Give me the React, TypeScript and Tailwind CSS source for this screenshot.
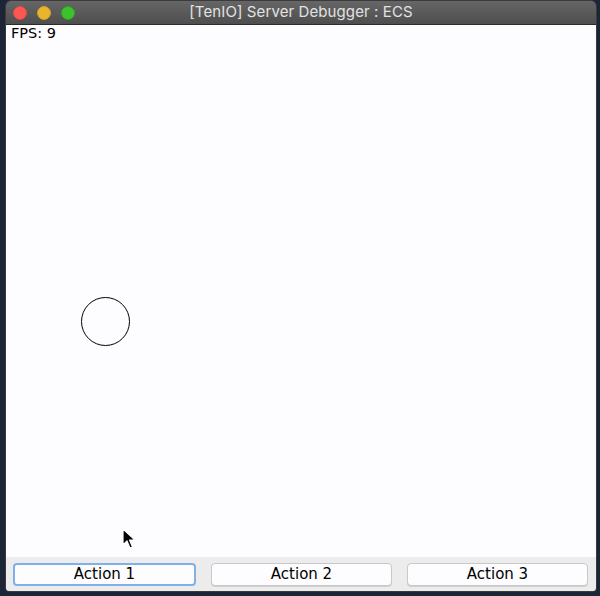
import { useState } from "react";

const actions = ["Action 1", "Action 2", "Action 3"];

const TrafficLights = () => (
  <div className="flex items-center gap-[10px] pl-[7px]">
    <span className="w-[14px] h-[14px] rounded-full bg-[#fc5753] border border-[#de4a44]" />
    <span className="w-[14px] h-[14px] rounded-full bg-[#e8b52c] border border-[#d19f26]" />
    <span className="w-[14px] h-[14px] rounded-full bg-[#3ec12f] border border-[#2ea724]" />
  </div>
);

const Cursor = () => (
  <svg width="14" height="22" viewBox="0 0 14 22" className="absolute left-[116px] top-[503px]">
    <path
      d="M1 1 L1 17 L5 13 L8 20 L10.5 19 L7.5 12 L13 12 Z"
      fill="#000"
      stroke="#fff"
      strokeWidth="1.2"
      strokeLinejoin="round"
    />
  </svg>
);

export default function App() {
  const [active, setActive] = useState(0);

  return (
    <div className="w-[600px] h-[596px] bg-[#1c2438] pl-[5px] pr-[3px] pb-[4px]">
      <div className="w-[592px] h-[592px] flex flex-col rounded-t-[6px] rounded-b-[4px] overflow-hidden border border-[#3a3a3a]">
        <div className="relative h-[24px] flex items-center bg-gradient-to-b from-[#666666] to-[#4e4e4e] border-b border-[#2b2b2b]">
          <TrafficLights />
          <div className="absolute inset-0 flex items-center justify-center text-[15px] text-[#e2e2e2] font-['Inter',sans-serif] tracking-[0.1px]">
            [TenIO] Server Debugger : ECS
          </div>
        </div>

        <div className="relative flex-1 bg-[#fdfcfe] font-['DejaVu_Sans',sans-serif]">
          <div className="pl-[5px] text-[14.5px] leading-[16px] text-black">FPS: 9</div>
          <div className="absolute left-[75px] top-[272px] w-[49px] h-[49px] rounded-full border-[1.5px] border-black" />
          <Cursor />
        </div>

        <div className="h-[34px] flex items-center gap-[15px] pl-[7px] pr-[8px] bg-[#ececec] font-['DejaVu_Sans',sans-serif]">
          {actions.map((label, i) => (
            <button
              key={label}
              onClick={() => setActive(i)}
              className={`flex-1 h-[23px] rounded-[4px] bg-[#fdfcfe] text-[15px] text-black leading-none ${
                active === i
                  ? "border-2 border-[#7fb0ea]"
                  : "border border-[#c8c8c8] shadow-[0_1px_0_#d0d0d0]"
              }`}
            >
              {label}
            </button>
          ))}
        </div>
      </div>
    </div>
  );
}
